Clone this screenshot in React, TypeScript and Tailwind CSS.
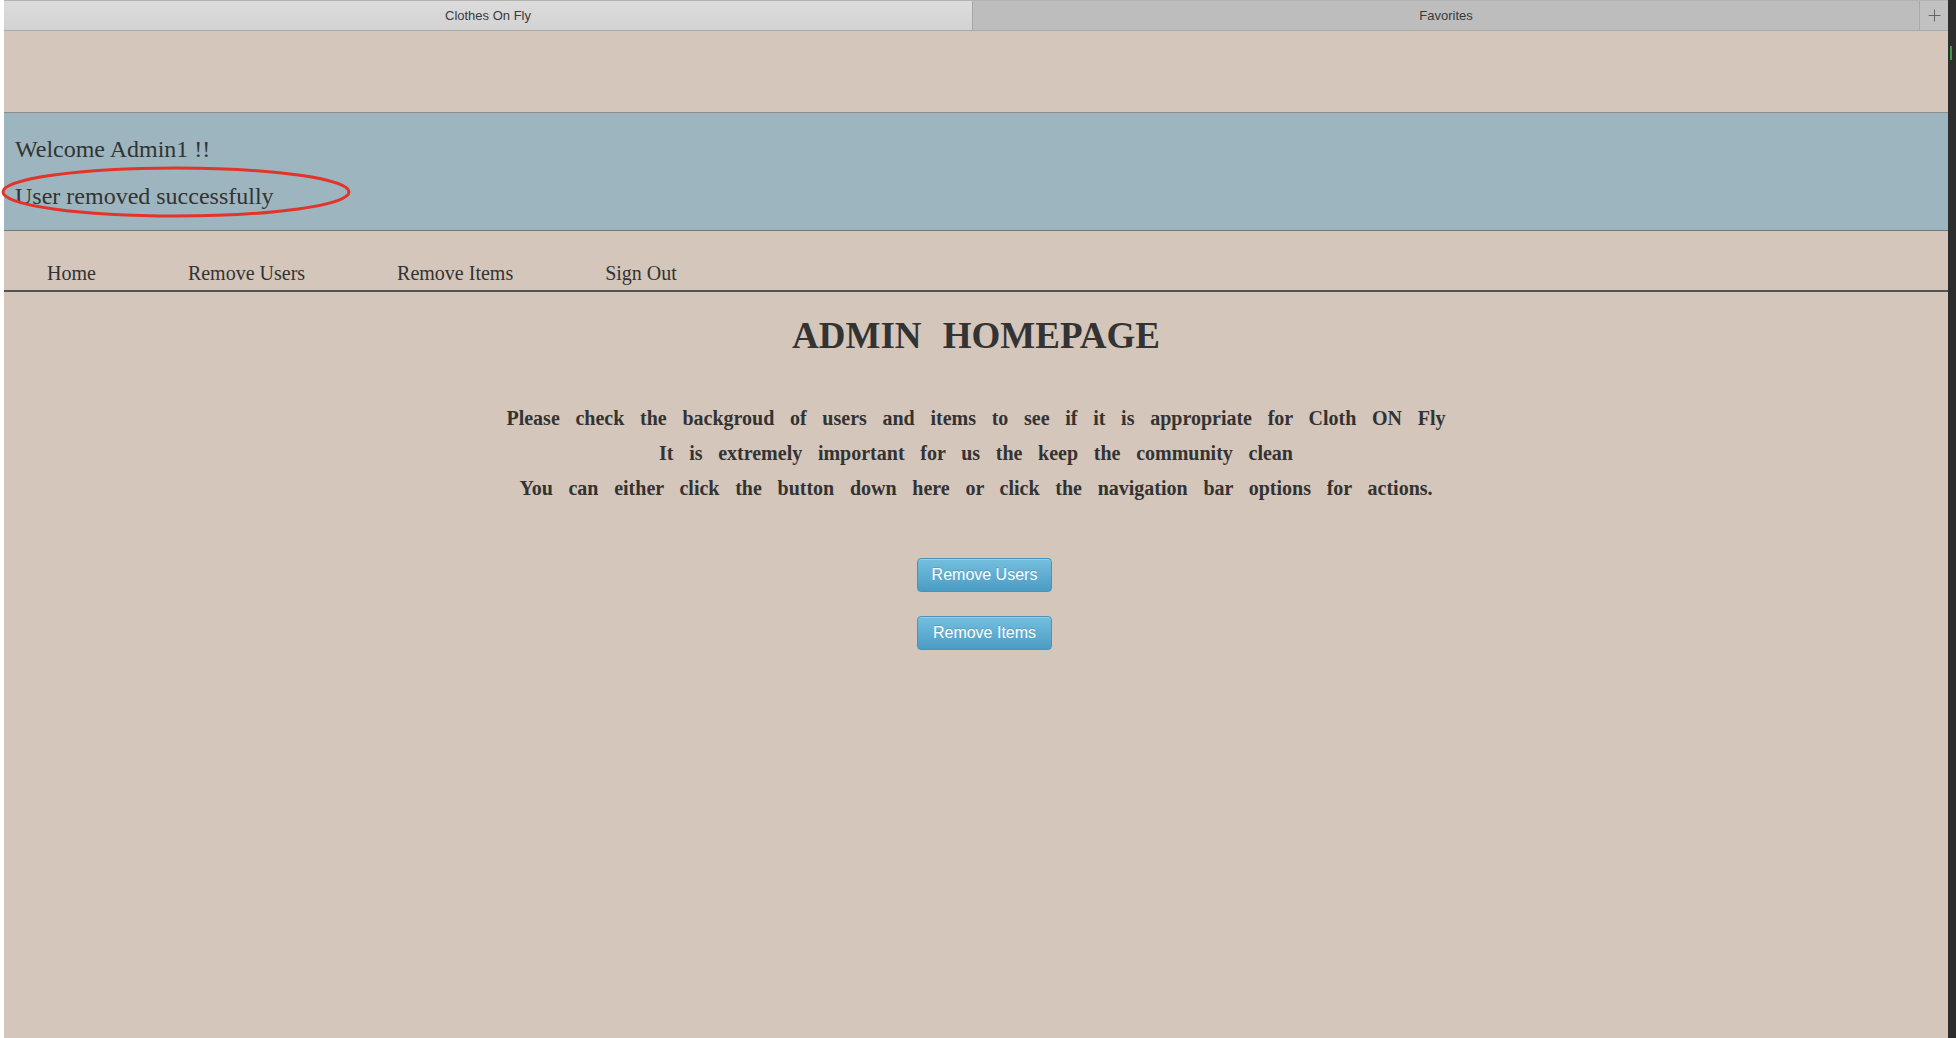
import { Plus } from "lucide-react"

const navLinks = ["Home", "Remove Users", "Remove Items", "Sign Out"]

const intro = [
  "Please check the backgroud of users and items to see if it is appropriate for Cloth ON Fly",
  "It is extremely important for us the keep the community clean",
  "You can either click the button down here or click the navigation bar options for actions.",
]

function ActionButton({ label }: { label: string }) {
  return (
    <button className="w-[135px] h-[34px] rounded-[4px] border border-[#4a93b9] bg-linear-to-b from-[#74bfdf] to-[#4b9cc4] text-white text-[16px] font-['Liberation_Sans',Arial,sans-serif] [text-shadow:0_-1px_0_rgba(0,0,0,0.15)] shadow-[inset_0_1px_0_rgba(255,255,255,0.25)]">
      {label}
    </button>
  )
}

export default function App() {
  return (
    <div className="flex w-[1956px] h-[1038px] overflow-hidden bg-white font-['Liberation_Serif','Times_New_Roman',serif] text-[#333]">
      {/* white gutter */}
      <div className="w-[4px] shrink-0 bg-white" />

      <div className="flex-1 flex flex-col bg-[#d4c6bb]">
        {/* browser tabs */}
        <div className="flex h-[31px] shrink-0 border-t border-[#b3b3b3] border-b border-b-[#a9a9a9] font-['Liberation_Sans',Arial,sans-serif] text-[13px] text-[#3a3a3a]">
          <div className="w-[968px] flex items-center justify-center bg-linear-to-b from-[#dcdcdc] to-[#d3d3d3]">
            Clothes On Fly
          </div>
          <div className="flex-1 flex items-center justify-center bg-[#bdbdbd] border-l border-[#a6a6a6]">
            Favorites
          </div>
          <div className="w-[29px] flex items-center justify-center bg-[#c1c1c1] border-l border-[#a9a9a9] text-[#555]">
            <Plus className="w-[19px] h-[19px]" strokeWidth={1.1} />
          </div>
        </div>

        {/* top spacer */}
        <div className="h-[82px] shrink-0 border-b border-[#8c8c8c]" />

        {/* welcome band */}
        <div className="relative h-[118px] shrink-0 bg-[#9db5bf] border-b border-[#767676] pl-[11px] pt-[22px] text-[24px] leading-[28px]">
          <div>Welcome Admin1 !!</div>
          <div className="mt-[19px]">User removed successfully</div>
          <svg
            className="absolute left-[-4px] top-[53px] overflow-visible"
            width="352"
            height="52"
            viewBox="0 0 352 52"
          >
            <ellipse cx="176" cy="26" rx="173" ry="24" fill="none" stroke="#e3342b" strokeWidth="3" />
          </svg>
        </div>

        {/* nav */}
        <nav className="shrink-0 border-b-2 border-[#525252] pt-[30px] pb-[5px] pl-[43px]">
          <ul className="flex gap-[92px] text-[20px] leading-[24px]">
            {navLinks.map((link) => (
              <li key={link}>{link}</li>
            ))}
          </ul>
        </nav>

        {/* main content */}
        <div className="flex flex-col items-center">
          <h1 className="mt-[24px] text-[37px] leading-[40px] font-bold [word-spacing:12px]">ADMIN HOMEPAGE</h1>
          <div className="mt-[45px] text-center text-[20px] leading-[35px] font-bold [word-spacing:10.7px]">
            {intro.map((line) => (
              <p key={line}>{line}</p>
            ))}
          </div>
          <div className="mt-[52px] ml-[17px] flex flex-col gap-[24px]">
            <ActionButton label="Remove Users" />
            <ActionButton label="Remove Items" />
          </div>
        </div>
      </div>

      {/* dark edge */}
      <div className="w-[8px] shrink-0 bg-[#2d2d2d] flex flex-col">
        <div className="mt-[46px] ml-[2px] h-[14px] w-[2px] bg-[#3f9a45]" />
      </div>
    </div>
  )
}
